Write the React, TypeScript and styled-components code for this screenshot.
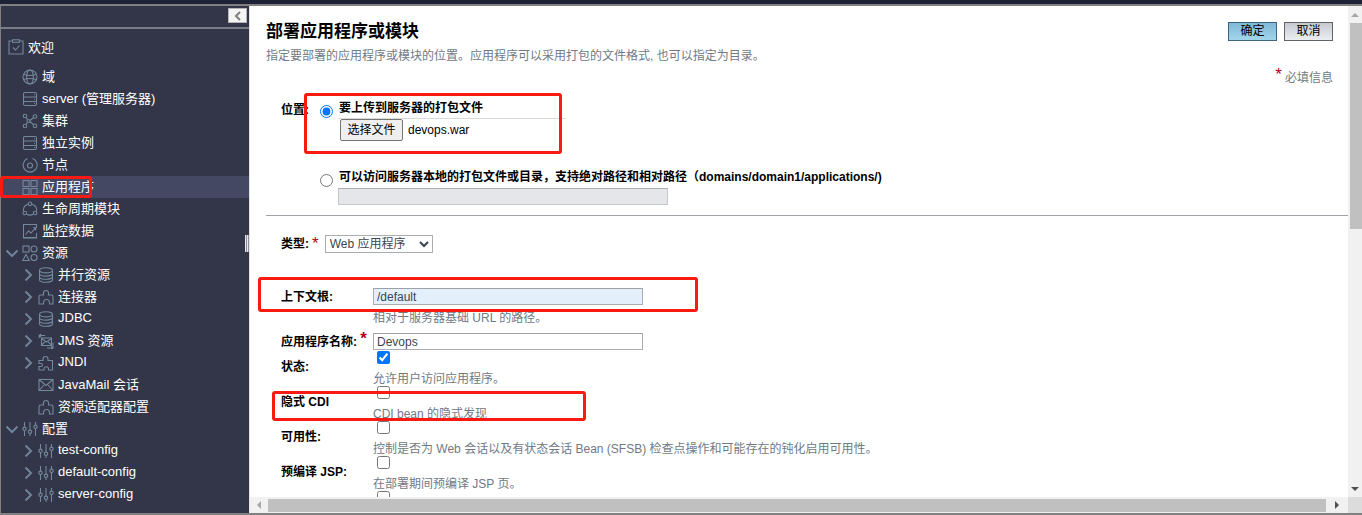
import React from "react";
import styled, { createGlobalStyle } from "styled-components";

const GlobalStyle = createGlobalStyle`
  html, body {
    margin: 0;
    padding: 0;
    background: #ffffff;
    overflow: hidden;
  }
  * {
    box-sizing: border-box;
  }
`;

const FONT = `"Liberation Sans", "Noto Sans CJK SC", sans-serif`;

const Page = styled.div`
  position: relative;
  width: 1362px;
  height: 515px;
  display: flex;
  flex-direction: column;
  font-family: ${FONT};
  overflow: hidden;
`;
const TopBar = styled.div`
  height: 6px;
  flex: none;
  background: #1e2236;
  border-bottom: 2px solid #808080;
`;
const Body = styled.div`
  flex: 1;
  min-height: 0;
  display: flex;
  border-bottom: 2px solid #808080;
`;

/* sidebar */
const Sidebar = styled.aside`
  position: relative;
  width: 250px;
  flex: none;
  background: #333548;
  border-left: 1px solid #808080;
  border-right: 1px solid #e4e4e4;
  display: flex;
  flex-direction: column;
`;
const SideHead = styled.div`
  height: 23px;
  flex: none;
  display: flex;
  justify-content: flex-end;
  align-items: flex-start;
  padding: 2px 2px 0 0;
  border-bottom: 2px solid #7b7c85;
`;
const Collapse = styled.div`
  width: 19px;
  height: 15px;
  background: #f4f4f4;
  border: 1px solid #b5b5b5;
  display: flex;
  align-items: center;
  justify-content: center;
  color: #7d7d7d;
`;
const Tree = styled.div`
  padding-top: 5px;
  display: flex;
  flex-direction: column;
`;
const WelcomeRow = styled.div`
  height: 25px;
  margin-bottom: 7px;
  display: flex;
  align-items: center;
  padding-left: 7px;
  gap: 4px;
  color: #ffffff;
  font-size: 13px;
`;
const TreeRow = styled.div<{ $level: number; $active?: boolean }>`
  height: 22px;
  display: flex;
  align-items: center;
  padding-left: ${(p) => (p.$level === 2 ? 21 : 5)}px;
  background: ${(p) => (p.$active ? "#454862" : "transparent")};
  color: #ffffff;
  font-size: 13px;
  white-space: nowrap;
`;
const Caret = styled.span`
  width: 16px;
  height: 16px;
  margin: 0 2px 0 -2px;
  flex: none;
  color: #6f8498;
  display: flex;
  align-items: center;
  justify-content: center;
`;
const RowLabel = styled.span`
  margin-left: 4px;
  padding-bottom: 4px;
`;
const Splitter = styled.div`
  position: absolute;
  right: 0;
  top: 229px;
  width: 4px;
  height: 17px;
  background: repeating-linear-gradient(90deg, #e8e8e8 0 1px, #8d8e98 1px 2px);
`;

/* main pane */
const Main = styled.main`
  flex: 1;
  min-width: 0;
  display: flex;
  flex-direction: column;
`;
const MainTop = styled.div`
  flex: 1;
  min-height: 0;
  display: flex;
`;
const Content = styled.div`
  flex: 1;
  min-width: 0;
  overflow: hidden;
  padding: 0 15px 0 16px;
`;
const TitleRow = styled.div`
  display: flex;
  justify-content: space-between;
  align-items: flex-start;
  padding-top: 16px;
`;
const Title = styled.h1`
  margin: 0;
  font-size: 17px;
  line-height: 19px;
  font-weight: 700;
  color: #000000;
`;
const Actions = styled.div`
  display: flex;
  gap: 7px;
`;
const ActionButton = styled.div<{ $primary?: boolean }>`
  width: 49px;
  height: 19px;
  font-size: 12px;
  line-height: 17px;
  text-align: center;
  color: #000000;
  border: 1px solid ${(p) => (p.$primary ? "#3d6480" : "#5f6468")};
  background: ${(p) =>
    p.$primary
      ? "linear-gradient(180deg, #7fb8d6 0%, #a3d4ec 100%)"
      : "linear-gradient(180deg, #c6cad0 0%, #eceef1 100%)"};
`;
const Description = styled.p`
  margin: 7px 0 0;
  font-size: 12px;
  line-height: 16px;
  color: #6f7a85;
`;
const RequiredNote = styled.div`
  margin-top: 6px;
  text-align: right;
  font-size: 12px;
  line-height: 16px;
  color: #6f7a85;
`;
const Star = styled.span`
  color: #b3001b;
  font-size: 17px;
  line-height: 10px;
  vertical-align: 2px;
  margin-right: 3px;
`;
const TypeStar = styled(Star)`
  margin: 0 3px 0 3px;
`;
const LocationRow = styled.div`
  display: grid;
  grid-template-columns: 39px 1fr;
  margin-top: 14px;
  padding-left: 15px;
`;
const FieldLabel = styled.span`
  font-size: 12px;
  line-height: 16px;
  font-weight: 700;
  color: #000000;
  white-space: nowrap;
`;
const LocationLabel = styled(FieldLabel)`
  padding-top: 2px;
`;
const Options = styled.div`
  display: flex;
  flex-direction: column;
  gap: 28px;
`;
const OptionRow = styled.div`
  display: grid;
  grid-template-columns: 19px 1fr;
  column-gap: 0;
`;
const Radio = styled.input`
  width: 13px;
  height: 13px;
  margin: 5px 0 0;
  accent-color: #0075ff;
`;
const OptionTitle = styled.div`
  font-size: 12px;
  line-height: 16px;
  font-weight: 700;
  color: #000000;
  white-space: nowrap;
`;
const OptionRule = styled.div`
  width: 227px;
  height: 1px;
  margin-top: 2px;
  background: #d9d9d9;
`;
const FileLine = styled.div`
  display: flex;
  align-items: center;
  gap: 5px;
  font-size: 12px;
  color: #000000;
`;
const FileButton = styled.div`
  width: 63px;
  height: 22px;
  margin-left: 1px;
  border: 1px solid #767676;
  border-radius: 2px;
  background: #efefef;
  font-size: 12px;
  line-height: 20px;
  text-align: center;
`;
const DisabledBox = styled.div`
  width: 330px;
  height: 17px;
  margin: 3px 0 0 -1px;
  background: #e4e6ea;
  border: 1px solid #c4c6c9;
  border-top-color: #aeb0b3;
`;
const Divider = styled.hr`
  margin: 10px -15px 0 0;
  border: 0;
  height: 1px;
  background: #a0a4a8;
`;
const TypeRow = styled.div`
  display: flex;
  align-items: center;
  margin-top: 19px;
  padding-left: 15px;
`;
const TypeSelect = styled.select`
  width: 108px;
  height: 18px;
  margin-left: 3px;
  padding: 0;
  font-family: ${FONT};
  font-size: 12px;
  color: #3c4650;
  background: #ffffff;
  border: 1px solid #a9adb1;
  border-radius: 0;
`;
const Form = styled.div`
  margin-top: 35px;
  padding-left: 15px;
  display: flex;
  flex-direction: column;
`;
const TextRow = styled.div`
  display: grid;
  grid-template-columns: 92px 270px;
  align-items: center;
`;
const TextField = styled.input<{ $filled?: boolean }>`
  width: 270px;
  height: 17px;
  padding: 0 3px;
  font-family: ${FONT};
  font-size: 12px;
  color: #3c4650;
  background: ${(p) => (p.$filled ? "#e3effb" : "#ffffff")};
  border: 1px solid #a9adb1;
  border-top-color: #9ea2a6;
  border-radius: 0;
  outline: none;
`;
const Help = styled.div`
  font-size: 12px;
  line-height: 16px;
  color: #6f7a85;
  white-space: nowrap;
`;
const NameBlock = styled.div`
  margin: 7px 0 1px;
`;
const HelpIndent = styled(Help)`
  margin-left: 92px;
  margin-top: 5px;
`;
const CheckRow = styled.div`
  display: grid;
  grid-template-columns: 92px 1fr;
  height: 35px;
`;
const CheckLabel = styled(FieldLabel)`
  padding-top: 8px;
`;
const CheckCell = styled.div`
  display: flex;
  flex-direction: column;
`;
const CheckBox = styled.input`
  width: 13px;
  height: 13px;
  margin: 0 0 0 4px;
  accent-color: #0075ff;
`;
const CheckHelp = styled(Help)`
  margin-top: 7px;
`;

/* scroll bars */
const VScroll = styled.div`
  width: 14px;
  flex: none;
  background: #f1f1f1;
  display: flex;
  flex-direction: column;
  align-items: flex-end;
`;
const ScrollEnd = styled.div`
  height: 17px;
  width: 14px;
  flex: none;
  display: flex;
  align-items: center;
  justify-content: center;
`;
const VThumb = styled.div`
  width: 12px;
  height: 206px;
  background: #c0c0c0;
`;
const Spacer = styled.div`
  flex: 1;
`;
const HScroll = styled.div`
  height: 16px;
  flex: none;
  display: flex;
  background: #f1f1f1;
`;
const HEnd = styled.div`
  width: 18px;
  flex: none;
  display: flex;
  align-items: center;
  justify-content: center;
`;
const HThumb = styled.div`
  flex: 1;
  height: 13px;
  margin-top: 2px;
  background: #c0c0c0;
`;
const HRight = styled.div`
  width: 22px;
  flex: none;
  display: flex;
  align-items: center;
  justify-content: center;
`;
const Corner = styled.div`
  width: 14px;
  flex: none;
  background: #dcdcdc;
`;

/* red annotations drawn over the screenshot */
const Mark = styled.div<{ $x: number; $y: number; $w: number; $h: number }>`
  position: absolute;
  left: ${(p) => p.$x}px;
  top: ${(p) => p.$y}px;
  width: ${(p) => p.$w}px;
  height: ${(p) => p.$h}px;
  border: 3px solid #fb1a12;
  border-radius: 3px;
  pointer-events: none;
`;

type IconProps = { children: React.ReactNode; size?: number };
const IconSvg = styled.svg`
  flex: none;
  color: #74889c;
  fill: none;
  stroke: currentColor;
  stroke-width: 1.1;
`;
function Icon({ children, size = 16 }: IconProps) {
  return (
    <IconSvg width={size} height={size} viewBox="0 0 16 16">
      {children}
    </IconSvg>
  );
}

const icons: Record<string, React.ReactNode> = {
  globe: (
    <>
      <circle cx="8" cy="8" r="7" />
      <ellipse cx="8" cy="8" rx="3.4" ry="7" />
      <path d="M1.6 5.4c4 1.3 8.8 1.3 12.8 0M1.6 10.6c4-1.3 8.800-1.300 12.800 0" />
    </>
  ),
  server: (
    <>
      <rect x="1.500" y="1.500" width="13" height="13" rx="1.500" />
      <path d="M1.500 6h13M1.500 10.500h13M12 3.800h1M12 8.200h1M12 12.500h1" />
    </>
  ),
  cluster: (
    <>
      <circle cx="3" cy="3" r="1.800" />
      <circle cx="3" cy="13" r="1.800" />
      <circle cx="13" cy="3.500" r="1.800" />
      <circle cx="13" cy="12.800" r="1.800" />
      <circle cx="6.500" cy="8" r="1.500" />
      <path d="M4 4.500l1.600 2.200M4 11.500l1.600-2.300M8 7.500l3.700-3M8 8.700l3.700 3" />
    </>
  ),
  node: (
    <>
      <path d="M10.500 1.500a7 7 0 1 1-5 .1" />
      <circle cx="8" cy="8.500" r="2.500" />
    </>
  ),
  grid: (
    <>
      <rect x="1" y="1.500" width="6" height="6" />
      <rect x="9" y="1.500" width="6" height="6" />
      <rect x="1" y="9.500" width="6" height="6" />
      <rect x="9" y="9.500" width="6" height="6" />
    </>
  ),
  lifecycle: (
    <>
      <circle cx="8" cy="2.800" r="1.800" />
      <circle cx="2.800" cy="12" r="1.800" />
      <circle cx="13.200" cy="12" r="1.800" />
      <path d="M5.900 3.300C3 4.200 1.200 6.900 1.300 10M10.100 3.300c2.900.9 4.700 3.600 4.600 6.700M4.800 13.200c2 1.100 4.400 1.100 6.400 0" />
    </>
  ),
  chart: (
    <>
      <path d="M14.500 5V1.500h-13v13h13V10" />
      <path d="M1 15h14" />
      <path d="M3.500 11.500l3-3.500 2.500 2 4.500-5M11 4.800h2.700v2.500" />
    </>
  ),
  resource: (
    <>
      <rect x="1" y="1" width="6" height="6" />
      <circle cx="12" cy="4" r="3" />
      <path d="M4 9.500l3.200 6H.8z" />
      <circle cx="12" cy="12.500" r="3" />
    </>
  ),
  database: (
    <>
      <ellipse cx="8" cy="3.300" rx="6.500" ry="2.600" />
      <path d="M1.500 3.300v9.400c0 1.400 2.900 2.600 6.500 2.600s6.500-1.200 6.500-2.600V3.300" />
      <path d="M1.500 6.500c0 1.400 2.900 2.600 6.500 2.600s6.500-1.200 6.500-2.600M1.500 9.700c0 1.400 2.900 2.600 6.500 2.600s6.500-1.200 6.500-2.600" />
    </>
  ),
  connector: (
    <path d="M1 15V7.500c0-1 .6-1.500 1.500-1.500H5.500V4a2.500 2.500 0 0 1 5 0v2h3c.9 0 1.500.5 1.500 1.500V15h-3.500v-1.500a3 3 0 0 0-6 0V15z" />
  ),
  jms: (
    <>
      <rect x="3.500" y="5" width="10" height="7.500" />
      <path d="M3.500 5.500l5 3.500 5-3.500M3.500 12l3.500-3.200M13.500 12L10 8.800" />
      <path d="M1.200 5V2.500h6M3 1L1.200 2.500 3 4M15 9.500V15H9M13.200 13.500L15 15l-1.800 1.500" />
    </>
  ),
  jndi: (
    <path d="M1 15v-3.500h2a1.500 1.500 0 0 0 0-3H1V5.500h4V4a2.500 2.500 0 0 1 5 0v1.500h4.500V15h-4v-1a2.200 2.200 0 0 0-4.400 0v1z" />
  ),
  mail: (
    <>
      <rect x="1" y="2.500" width="14" height="11" />
      <path d="M1 2.500l7 6 7-6M1 13.500l5-5.500M15 13.500L10 8" />
    </>
  ),
  config: (
    <>
      <path d="M2.500 1v5M2.500 9.500V15M8 1v8M8 12.500V15M13.500 1v3M13.500 7.500V15" />
      <circle cx="2.500" cy="7.800" r="1.700" />
      <circle cx="8" cy="10.800" r="1.700" />
      <circle cx="13.500" cy="5.800" r="1.700" />
    </>
  ),
};

type TreeItem = {
  label: string;
  icon: string;
  level: 1 | 2;
  caret?: "open" | "closed";
  active?: boolean;
};

const treeItems: TreeItem[] = [
  { label: "域", icon: "globe", level: 1 },
  { label: "server (管理服务器)", icon: "server", level: 1 },
  { label: "集群", icon: "cluster", level: 1 },
  { label: "独立实例", icon: "server", level: 1 },
  { label: "节点", icon: "node", level: 1 },
  { label: "应用程序", icon: "grid", level: 1, active: true },
  { label: "生命周期模块", icon: "lifecycle", level: 1 },
  { label: "监控数据", icon: "chart", level: 1 },
  { label: "资源", icon: "resource", level: 1, caret: "open" },
  { label: "并行资源", icon: "database", level: 2, caret: "closed" },
  { label: "连接器", icon: "connector", level: 2, caret: "closed" },
  { label: "JDBC", icon: "database", level: 2, caret: "closed" },
  { label: "JMS 资源", icon: "jms", level: 2, caret: "closed" },
  { label: "JNDI", icon: "jndi", level: 2, caret: "closed" },
  { label: "JavaMail 会话", icon: "mail", level: 2 },
  { label: "资源适配器配置", icon: "connector", level: 2 },
  { label: "配置", icon: "config", level: 1, caret: "open" },
  { label: "test-config", icon: "config", level: 2, caret: "closed" },
  { label: "default-config", icon: "config", level: 2, caret: "closed" },
  { label: "server-config", icon: "config", level: 2, caret: "closed" },
];

const checkItems = [
  { label: "状态:", help: "允许用户访问应用程序。", checked: true },
  { label: "隐式 CDI", help: "CDI bean 的隐式发现", checked: false },
  {
    label: "可用性:",
    help: "控制是否为 Web 会话以及有状态会话 Bean (SFSB) 检查点操作和可能存在的钝化启用可用性。",
    checked: false,
  },
  { label: "预编译 JSP:", help: "在部署期间预编译 JSP 页。", checked: false },
  { label: "", help: "", checked: false },
];

function CaretIcon({ open }: { open: boolean }) {
  return (
    <svg width="12" height="12" viewBox="0 0 12 12" fill="none" stroke="currentColor" strokeWidth="2">
      <path d={open ? "M.5 3.500L6 9l5.500-5.500" : "M3.500 .5L9 6l-5.500 5.500"} />
    </svg>
  );
}

function Arrow({ dir }: { dir: "up" | "down" | "left" | "right" }) {
  const points = {
    up: "0,5 4,1 8,5",
    down: "0,1 8,1 4,5",
    left: "5,0 5,8 1,4",
    right: "1,0 1,8 5,4",
  }[dir];
  const tint = dir === "up" || dir === "left" ? "#a8a8a8" : "#505050";
  const horizontal = dir === "left" || dir === "right";
  return (
    <svg width={horizontal ? 6 : 8} height={horizontal ? 8 : 6}>
      <polygon points={points} fill={tint} />
    </svg>
  );
}

export default function App() {
  return (
    <Page>
      <GlobalStyle />
      <TopBar />
      <Body>
        <Sidebar>
          <SideHead>
            <Collapse>
              <svg width="8" height="10" viewBox="0 0 8 10" fill="none" stroke="currentColor" strokeWidth="2">
                <path d="M6 1L2 5l4 4" />
              </svg>
            </Collapse>
          </SideHead>
          <Tree>
            <WelcomeRow>
              <Icon>
                <path d="M4.500 2H1v13h14V2h-3.500" />
                <rect x="4.500" y=".8" width="7" height="2.500" />
                <path d="M5 8.500l2.500 2.500L11.500 6.500" />
              </Icon>
              欢迎
            </WelcomeRow>
            {treeItems.map((item) => (
              <TreeRow key={item.label} $level={item.level} $active={item.active}>
                <Caret>{item.caret && <CaretIcon open={item.caret === "open"} />}</Caret>
                <Icon>{icons[item.icon]}</Icon>
                <RowLabel>{item.label}</RowLabel>
              </TreeRow>
            ))}
          </Tree>
          <Splitter />
        </Sidebar>
        <Main>
          <MainTop>
            <Content>
              <TitleRow>
                <Title>部署应用程序或模块</Title>
                <Actions>
                  <ActionButton $primary>确定</ActionButton>
                  <ActionButton>取消</ActionButton>
                </Actions>
              </TitleRow>
              <Description>指定要部署的应用程序或模块的位置。应用程序可以采用打包的文件格式, 也可以指定为目录。</Description>
              <RequiredNote>
                <Star>*</Star>必填信息
              </RequiredNote>
              <LocationRow>
                <LocationLabel>位置:</LocationLabel>
                <Options>
                  <OptionRow>
                    <Radio type="radio" name="location" defaultChecked />
                    <div>
                      <OptionTitle>要上传到服务器的打包文件</OptionTitle>
                      <OptionRule />
                      <FileLine>
                        <FileButton>选择文件</FileButton>
                        devops.war
                      </FileLine>
                    </div>
                  </OptionRow>
                  <OptionRow>
                    <Radio type="radio" name="location" />
                    <div>
                      <OptionTitle>
                        可以访问服务器本地的打包文件或目录，支持绝对路径和相对路径（domains/domain1/applications/)
                      </OptionTitle>
                      <DisabledBox />
                    </div>
                  </OptionRow>
                </Options>
              </LocationRow>
              <Divider />
              <TypeRow>
                <FieldLabel>类型:</FieldLabel>
                <TypeStar>*</TypeStar>
                <TypeSelect defaultValue="web">
                  <option value="web">Web 应用程序</option>
                </TypeSelect>
              </TypeRow>
              <Form>
                <TextRow>
                  <FieldLabel>上下文根:</FieldLabel>
                  <TextField $filled defaultValue="/default" />
                </TextRow>
                <HelpIndent>相对于服务器基础 URL 的路径。</HelpIndent>
                <NameBlock>
                  <TextRow>
                    <FieldLabel>
                      应用程序名称: <Star>*</Star>
                    </FieldLabel>
                    <TextField defaultValue="Devops" />
                  </TextRow>
                </NameBlock>
                {checkItems.map((item, i) => (
                  <CheckRow key={i}>
                    <CheckLabel>{item.label}</CheckLabel>
                    <CheckCell>
                      <CheckBox type="checkbox" defaultChecked={item.checked} />
                      <CheckHelp>{item.help}</CheckHelp>
                    </CheckCell>
                  </CheckRow>
                ))}
              </Form>
            </Content>
            <VScroll>
              <ScrollEnd>
                <Arrow dir="up" />
              </ScrollEnd>
              <VThumb />
              <Spacer />
              <ScrollEnd>
                <Arrow dir="down" />
              </ScrollEnd>
            </VScroll>
          </MainTop>
          <HScroll>
            <HEnd>
              <Arrow dir="left" />
            </HEnd>
            <HThumb />
            <HRight>
              <Arrow dir="right" />
            </HRight>
            <Corner />
          </HScroll>
        </Main>
      </Body>
      <Mark $x={304} $y={93} $w={258} $h={61} />
      <Mark $x={0} $y={176} $w={92} $h={22} />
      <Mark $x={258} $y={277} $w={440} $h={35} />
      <Mark $x={272} $y={391} $w={314} $h={30} />
    </Page>
  );
}
